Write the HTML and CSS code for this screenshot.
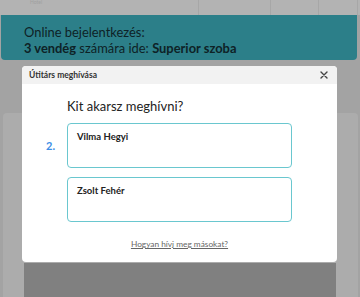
FILE: index.html
```html
<!DOCTYPE html>
<html lang="hu">
<head>
<meta charset="utf-8">
<title>Útitárs meghívása</title>
<link rel="stylesheet" href="styles.css">
</head>
<body>
<div class="page">
  <div class="topbar">
    <div class="col c1"><span class="hotel">Hotel</span></div>
    <div class="col c2"></div>
    <div class="col c3"></div>
    <div class="col c4"></div>
  </div>
  <div class="banner">
    <p>Online bejelentkezés:</p>
    <p><b>3 vendég</b> számára ide: <b>Superior szoba</b></p>
  </div>
  <div class="card">
    <div class="card-dark"></div>
  </div>
</div>
<div class="modal">
  <div class="modal-head">
    <span class="modal-title">Útitárs meghívása</span>
    <svg class="close" width="8" height="8" viewBox="0 0 8 8"><path d="M1 1L7 7M7 1L1 7" stroke="#444" stroke-width="1.4" stroke-linecap="round"/></svg>
  </div>
  <div class="modal-body">
    <h2 class="question">Kit akarsz meghívni?</h2>
    <div class="row">
      <span class="num">2.</span>
      <div class="field">Vilma Hegyi</div>
    </div>
    <div class="row">
      <span class="num"></span>
      <div class="field">Zsolt Fehér</div>
    </div>
    <a class="help" href="#">Hogyan hívj meg másokat?</a>
  </div>
</div>
</body>
</html>
```

FILE: styles.css
```css
html, body {
  margin: 0;
  padding: 0;
}
body {
  width: 360px;
  height: 297px;
  overflow: hidden;
  background: #a3a3a3;
  font-family: "Lato", "Open Sans", sans-serif;
  position: relative;
}
.page {
  display: flex;
  flex-direction: column;
  height: 297px;
}
.topbar {
  height: 15px;
  background: #b3b3b3;
  display: flex;
}
.col {
  border-right: 1px solid #a7a7a7;
  position: relative;
  overflow: hidden;
}
.c1 { width: 198px; }
.c2 { width: 71px; }
.c3 { width: 47px; }
.c4 { width: 38px; }
.hotel {
  display: block;
  margin-left: 30px;
  margin-top: 0;
  font-size: 5px;
  line-height: 5px;
  color: #a0a0a0;
}
.banner {
  margin: 0 3px 0 1px;
  height: 45px;
  background: #2c7f89;
  border-radius: 0 0 4px 4px;
  padding: 9px 0 0 23px;
  box-sizing: border-box;
  color: #0e2226;
  font-size: 12.9px;
  line-height: 16px;
}
.banner p {
  margin: 0;
}
.banner b {
  font-weight: 700;
}
.card {
  margin: 53px 2px 0 3px;
  flex: 1;
  background: #acacac;
  border-radius: 4px 4px 0 0;
  padding-top: 150px;
  display: flex;
}
.card-dark {
  flex: 1;
  margin: 0 22px 0 21px;
  background: #808080;
}
.modal {
  position: absolute;
  left: 22px;
  top: 66px;
  width: 315px;
  height: 196px;
  background: #fff;
  border-radius: 4px;
  overflow: hidden;
  display: flex;
  flex-direction: column;
}
.modal-head {
  height: 18px;
  background: #f2f2f2;
  display: flex;
  align-items: center;
  justify-content: space-between;
  padding: 0 9px 0 7px;
}
.modal-title {
  font-size: 8.5px;
  font-weight: 700;
  color: #333;
}
.close {
  display: block;
}
.modal-body {
  display: flex;
  flex-direction: column;
  padding-top: 14px;
}
.question {
  margin: 0 0 9px 45px;
  font-size: 13px;
  font-weight: 400;
  line-height: 16px;
  color: #222;
}
.row {
  display: flex;
  align-items: center;
  margin-bottom: 9px;
}
.num {
  width: 45px;
  box-sizing: border-box;
  padding-left: 24px;
  font-size: 11px;
  font-weight: 700;
  color: #3d8ee6;
}
.field {
  width: 225px;
  height: 45px;
  box-sizing: border-box;
  border: 1.5px solid #6ac7cf;
  border-radius: 4px;
  padding: 7px 0 0 9px;
  font-size: 9.5px;
  font-weight: 700;
  color: #222;
}
.help {
  align-self: center;
  margin-top: 8px;
  font-size: 8.3px;
  color: #666;
  text-decoration: underline;
}
```
